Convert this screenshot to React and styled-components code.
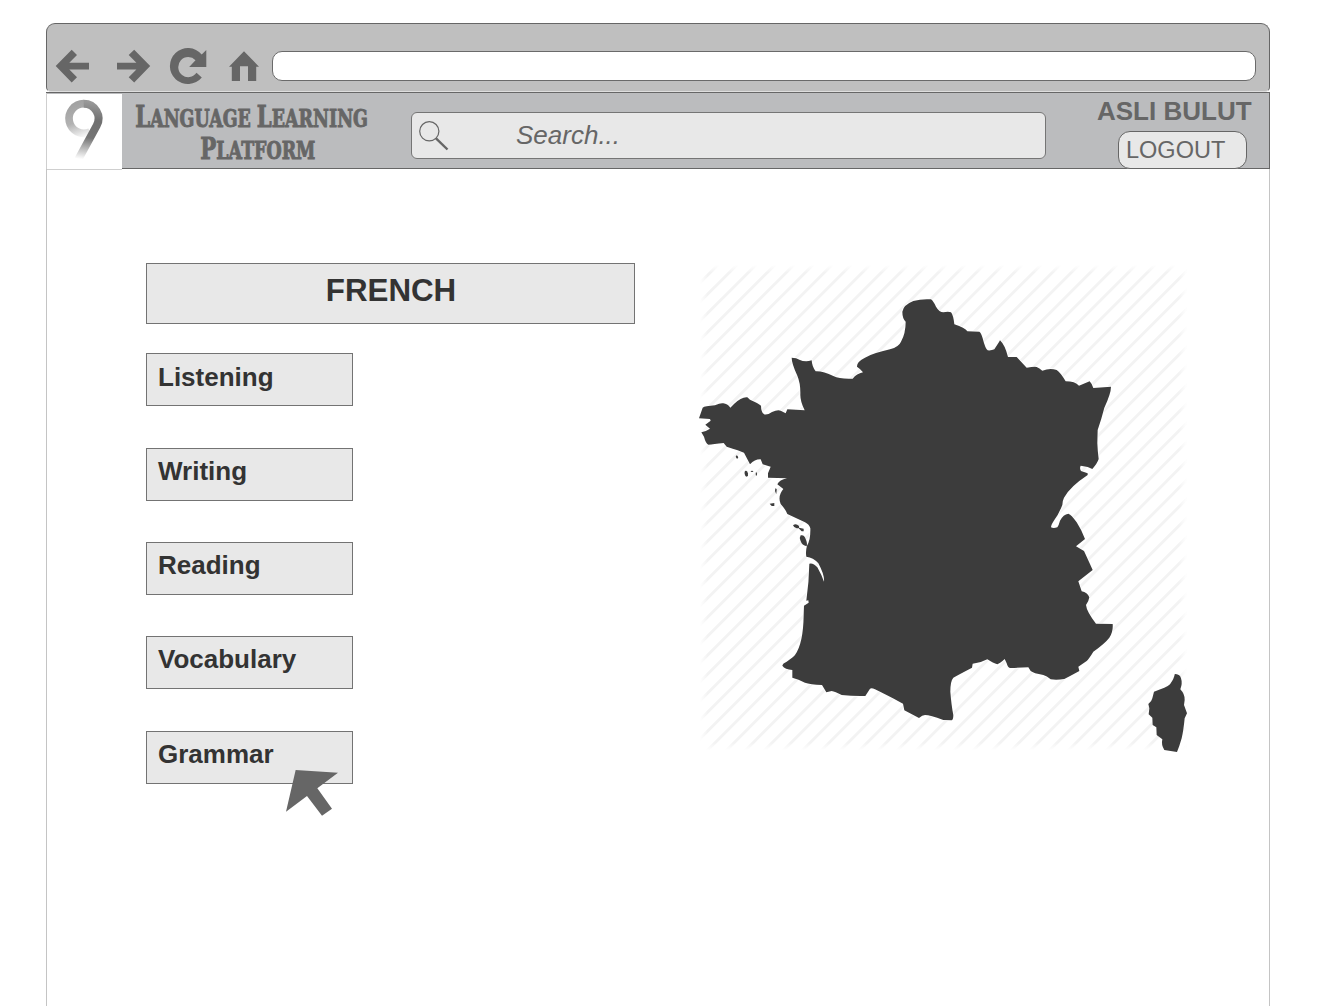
import React from "react";
import styled, { createGlobalStyle } from "styled-components";

const GlobalStyle = createGlobalStyle`
  * { box-sizing: border-box; }
  html, body { margin: 0; background: #fff; }
  body { font-family: "Liberation Sans", Arial, sans-serif; color: #666; overflow: hidden; }
`;

const Page = styled.div`
  height: 1006px;
  padding: 23px 71px 0 46px;
  display: flex;
  flex-direction: column;
`;

const Chrome = styled.div`
  flex: none;
  height: 69px;
  display: flex;
  align-items: flex-start;
  padding: 23px 13px 0 8px;
  background: #bfbfbf;
  border: 1px solid #666;
  border-bottom-color: #dedede;
  border-radius: 9px 9px 5px 5px;
`;

const NavIcon = styled.svg`
  flex: none;
  display: block;
  width: ${(p) => p.$w}px;
  height: 38px;
  margin-right: ${(p) => p.$gap}px;
  fill: #666;
`;

const AddressBar = styled.div`
  flex: 1;
  height: 30px;
  margin-top: 4px;
  background: #fff;
  border: 1px solid #6a6a6a;
  border-radius: 10px;
`;

const Header = styled.header`
  flex: none;
  height: 77px;
  display: flex;
  align-items: flex-start;
  background: #bbbcbe;
  border: 1px solid #666;
  border-left: 0;
`;

const LogoBox = styled.div`
  flex: none;
  width: 76px;
  height: 77px;
  padding-top: 1px;
  margin-bottom: -1px;
  background: #fff;
  background-clip: content-box;
  border: solid #cfcfcf;
  border-width: 0 0 1px 1px;
`;

const LogoMark = styled.svg`
  display: block;
  width: 75px;
  height: 75px;
`;

const Wordmark = styled.div`
  flex: none;
  width: 233px;
  height: 66px;
  margin: 8px 8px 0 13px;
  display: flex;
  flex-direction: column;
  align-items: center;
  font-family: "DejaVu Serif", serif;
  font-weight: bold;
  font-size: 24.2px;
`;

const WordmarkLine = styled.div`
  height: 32px;
  margin-left: ${(p) => p.$indent || 0}px;
  line-height: 36px;
  white-space: nowrap;
  transform: scaleX(0.72);
  -webkit-text-stroke: 1px #666;
`;

const Initial = styled.span`
  font-size: 29.5px;
  line-height: 1;
`;

const SearchBox = styled.div`
  flex: none;
  width: 635px;
  height: 47px;
  margin: 19px 0 0 35px;
  display: flex;
  align-items: center;
  background: #e8e8e8;
  border: 1px solid #757575;
  border-radius: 6px;
  font-size: 26px;
  line-height: 30px;
  font-style: italic;
`;

const SearchIcon = styled.svg`
  width: 34px;
  height: 34px;
  margin-left: 5px;
  fill: none;
  stroke: #666;
`;

const SearchText = styled.span`
  margin: 0 0 2px 65px;
`;

const Account = styled.div`
  flex: none;
  margin-left: 51px;
  display: flex;
  flex-direction: column;
`;

const UserName = styled.div`
  height: 38px;
  padding-top: 3px;
  font-size: 26px;
  line-height: 30px;
  font-weight: bold;
  white-space: nowrap;
`;

const Logout = styled.div`
  width: 129px;
  height: 38px;
  margin-left: 21px;
  padding: 4px 0 0 7px;
  background: #e8e8e8;
  border: 1px solid #666;
  border-radius: 12px;
  font-size: 23.5px;
  line-height: 28px;
`;

const Body = styled.main`
  flex: 1;
  display: flex;
  align-items: flex-start;
  padding: 94px 0 0 99px;
  border: solid #c4c4c4;
  border-width: 0 1px;
`;

const Lessons = styled.section`
  flex: none;
  width: 489px;
`;

const Language = styled.h1`
  height: 61px;
  margin: 0 0 29.4px;
  padding: 9px 0 0 1px;
  background: #e8e8e8;
  border: 1px solid #737373;
  color: #333;
  font-size: 31.3px;
  line-height: 36px;
  text-align: center;
`;

const Skills = styled.nav`
  display: flex;
  flex-direction: column;
  gap: 41.3px;
`;

const Skill = styled.div`
  position: relative;
  width: 207px;
  height: 53px;
  padding: 7.2px 0 0 11px;
  background: #e8e8e8;
  border: 1px solid #737373;
  color: #333;
  font-size: 26px;
  line-height: 30px;
  font-weight: bold;
`;

const Cursor = styled.svg`
  position: absolute;
  left: 138.3px;
  top: 37.5px;
  width: 54px;
  height: 48px;
  fill: #666;
`;

const CountryMap = styled.svg`
  flex: none;
  display: block;
  width: 500px;
  height: 500px;
  margin: -8px 0 0 55px;
`;

const MAINLAND =
  "M27,490 L38,458 Q44,453 75,451 Q92,443 100,445 Q112,446 121,458 L132,447 Q155,425 172,427 L180,434 Q205,445 213,452 Q213,470 222,478 Q232,481 246,471 Q262,464 272,467 L287,475 L292,463 L344,466 Q331,440 331,420 Q332,385 322,362 Q305,325 305,308 Q320,308 328,314 Q345,322 365,316 Q366,335 377,349 Q400,348 430,363 Q450,373 488,371 Q500,356 519,352 Q512,342 501,335 Q500,320 525,308 Q550,294 600,283 Q627,275 633,260 Q647,235 647,200 Q637,190 637,170 Q640,150 670,138 Q695,131 723,133 Q730,138 738,155 Q748,172 760,172 Q775,168 783,172 Q790,180 793,208 Q825,218 832,229 L868,230 Q873,232 878,250 Q886,282 893,286 Q905,287 913,283 Q925,265 930,256 Q945,270 954,306 L980,306 L1010,338 Q1035,334 1040,336 Q1048,340 1057,347 Q1080,338 1100,345 Q1112,353 1127,379 Q1155,379 1167,392 L1199,379 Q1205,385 1210,399 L1263,395 Q1263,415 1243,458 Q1235,490 1223,525 L1222,565 Q1223,590 1226,612 Q1222,625 1207,642 L1193,636 L1172,632 Q1168,640 1173,648 L1193,655 L1193,660 Q1140,695 1122,728 Q1118,735 1117,750 Q1105,780 1093,795 Q1083,810 1083,817 Q1090,821 1102,817 Q1106,812 1110,797 Q1120,778 1135,776 Q1145,780 1160,802 Q1175,825 1185,852 L1158,874 L1182,888 Q1190,905 1208,945 L1165,979 L1175,1009 Q1192,1012 1198,1027 Q1196,1040 1188,1050 Q1190,1070 1218,1106 L1268,1107 Q1270,1130 1258,1148 Q1245,1165 1210,1190 Q1198,1210 1190,1218 L1165,1235 L1168,1248 Q1150,1258 1123,1272 Q1100,1276 1082,1273 Q1070,1263 1060,1260 Q1030,1255 1022,1248 L1015,1237 Q990,1238 960,1239 Q953,1237 950,1225 L944,1212 Q930,1225 922,1228 Q910,1225 892,1213 Q870,1225 848,1226 L846,1238 Q800,1262 790,1268 Q781,1278 781,1310 Q784,1350 790,1380 Q790,1395 785,1396 L760,1395 Q720,1380 705,1380 Q697,1380 687,1389 L643,1366 L639,1346 Q590,1320 555,1303 Q545,1298 540,1301 L526,1323 Q490,1324 455,1320 Q435,1310 425,1308 L409,1312 L396,1290 Q360,1288 345,1283 Q325,1272 307,1268 L307,1245 Q285,1243 277,1232 Q278,1225 290,1220 Q310,1207 315,1200 Q340,1165 341,1080 L342,1052 L356,1043 L355,1036 L349,1037 Q357,980 358,926 Q370,923 382,937 Q395,960 402,980 Q404,960 385,925 Q370,907 349,905 Q346,890 351,872 Q362,855 361,820 Q358,808 345,802 L292,777 Q288,765 272,747 Q265,730 272,715 Q275,708 280,702 L262,688 Q268,675 291,670 L234,668 L234,655 L242,635 L218,628 L212,613 Q195,612 180,628 L162,593 Q150,587 110,575 L101,564 Q70,568 55,569 Q47,565 42,545 L34,532 Q50,528 60,521 L46,509 L62,497 L60,492 Z";

const CORSICA =
  "M1457,1257 Q1470,1258 1473,1270 Q1478,1285 1471,1303 Q1485,1318 1484,1335 L1482,1350 L1491,1375 L1484,1390 Q1480,1430 1475,1450 Q1468,1475 1461,1491 L1423,1485 Q1413,1470 1417,1453 L1400,1440 L1399,1417 L1388,1410 L1387,1388 L1376,1378 L1378,1360 L1375,1347 Q1385,1340 1387,1330 L1392,1310 Q1430,1298 1440,1288 Q1453,1270 1454,1258 Z";

const STRIPES = Array.from({ length: 51 }, (_, i) => 113.5 + i * 57);

function France() {
  return (
    <CountryMap viewBox="0 0 1500 1500">
      <defs>
        <linearGradient id="fadeX">
          <stop offset="0" stopColor="#fff" />
          <stop offset=".016" stopColor="#fff" stopOpacity="0" />
          <stop offset=".984" stopColor="#fff" stopOpacity="0" />
          <stop offset="1" stopColor="#fff" />
        </linearGradient>
        <linearGradient id="fadeY" x2="0" y2="1">
          <stop offset="0" stopColor="#fff" />
          <stop offset=".016" stopColor="#fff" stopOpacity="0" />
          <stop offset=".984" stopColor="#fff" stopOpacity="0" />
          <stop offset="1" stopColor="#fff" />
        </linearGradient>
        <clipPath id="tile">
          <rect x="31" y="31" width="1458" height="1454" />
        </clipPath>
      </defs>
      <g clipPath="url(#tile)" stroke="#f3f3f3" strokeWidth="8.500">
        {STRIPES.map((s) => (
          <line key={s} x1={s} y1="0" x2={s - 1500} y2="1500" />
        ))}
      </g>
      <rect x="30" y="30" width="1460" height="1456" fill="url(#fadeX)" />
      <rect x="30" y="30" width="1460" height="1456" fill="url(#fadeY)" />
      <g fill="#3c3c3c">
        <path d={MAINLAND} stroke="#fff" strokeWidth="5" paintOrder="stroke" />
        <path d={CORSICA} />
        <ellipse cx="141" cy="606" rx="3" ry="5" transform="rotate(-25 141 606)" />
        <ellipse cx="169" cy="656" rx="5" ry="9" transform="rotate(-10 169 656)" />
        <ellipse cx="186" cy="649" rx="4" ry="2" />
        <ellipse cx="199" cy="657" rx="2" ry="5" />
        <path d="M256,700 L260,702 L259,718 L255,708 Z" />
        <path d="M239,746 L253,744 L253,753 L245,753 Z" />
        <path d="M309,811 Q318,804 327,813 L327,818 L341,821 V829 L335,829 L325,819 Q313,822 309,811 Z" />
        <path d="M332,841 Q342,838 346,850 Q353,865 350,874 Q336,872 331,856 Q328,847 332,841 Z" />
      </g>
    </CountryMap>
  );
}

function NineLogo() {
  return (
    <LogoMark viewBox="33 240 225 225">
      <defs>
        <linearGradient id="ring" gradientUnits="userSpaceOnUse" x1="115" y1="270" x2="150" y2="372">
          <stop offset="0" stopColor="#a2a2a2" />
          <stop offset=".5" stopColor="#b2b2b2" />
          <stop offset="1" stopColor="#fff" />
        </linearGradient>
        <linearGradient id="tail" gradientUnits="userSpaceOnUse" x1="150" y1="262" x2="128" y2="440">
          <stop offset="0" stopColor="#999" />
          <stop offset=".3" stopColor="#707070" />
          <stop offset=".6" stopColor="#747474" />
          <stop offset=".8" stopColor="#c0c0c0" />
          <stop offset=".97" stopColor="#fff" />
        </linearGradient>
      </defs>
      <path d="M144,269 A44.500,44.500 0 1 0 162,354" fill="none" stroke="url(#ring)" strokeWidth="23" />
      <path d="M143,269 A44.500,44.500 0 0 1 182,335 L127,436" fill="none" stroke="url(#tail)" strokeWidth="24" />
    </LogoMark>
  );
}

const SKILLS = ["Listening", "Writing", "Reading", "Vocabulary", "Grammar"];

export default function App() {
  return (
    <>
      <GlobalStyle />
      <Page>
        <Chrome>
          <NavIcon $w={35} $gap={26} viewBox="55 47 35 38">
            <path d="M55.700,66 L71.700,49.700 L77,55 L69.300,62.800 H89 V69.400 H69.300 L77,77.200 L71.700,82.400 Z" />
          </NavIcon>
          <NavIcon $w={35} $gap={18} viewBox="116 47 35 38">
            <path d="M150.200,66 L134.200,49.700 L128.700,55 L136.400,62.800 H117 V69.400 H136.400 L128.700,77.200 L134.200,82.400 Z" />
          </NavIcon>
          <NavIcon $w={38} $gap={22} viewBox="169 47 38 38">
            <path d="M201.700,54.500 L206.300,50 V67 H189.200 L195.500,60.200 A10,10 0 1 0 196.500,72.800 L201.800,77.500 A18,18 0 1 1 201.700,54.500 Z" />
          </NavIcon>
          <NavIcon $w={30} $gap={13} viewBox="229 47 30 38">
            <path d="M244,51.300 L259,66.700 H256.200 V81 H248 V66.300 H240 V81 H231.800 V66.700 H229 Z" />
          </NavIcon>
          <AddressBar />
        </Chrome>
        <Header>
          <LogoBox>
            <NineLogo />
          </LogoBox>
          <Wordmark>
            <WordmarkLine>
              <Initial>L</Initial>ANGUAGE <Initial>L</Initial>EARNING
            </WordmarkLine>
            <WordmarkLine $indent={13}>
              <Initial>P</Initial>LATFORM
            </WordmarkLine>
          </Wordmark>
          <SearchBox>
            <SearchIcon viewBox="417 119 34 34">
              <circle cx="429.300" cy="131.300" r="9.600" strokeWidth="1.200" />
              <path d="M436,138.300 L447.500,149.500" strokeWidth="2.400" />
            </SearchIcon>
            <SearchText>Search...</SearchText>
          </SearchBox>
          <Account>
            <UserName>ASLI BULUT</UserName>
            <Logout>LOGOUT</Logout>
          </Account>
        </Header>
        <Body>
          <Lessons>
            <Language>FRENCH</Language>
            <Skills>
              {SKILLS.map((name) => (
                <Skill key={name}>
                  {name}
                  {name === "Grammar" && (
                    <Cursor viewBox="466 417 162 144">
                      <path d="M498,420 L625,428 L563,475 L607,536 L577,557 L532,498 L469,545 Z" />
                    </Cursor>
                  )}
                </Skill>
              ))}
            </Skills>
          </Lessons>
          <France />
        </Body>
      </Page>
    </>
  );
}
